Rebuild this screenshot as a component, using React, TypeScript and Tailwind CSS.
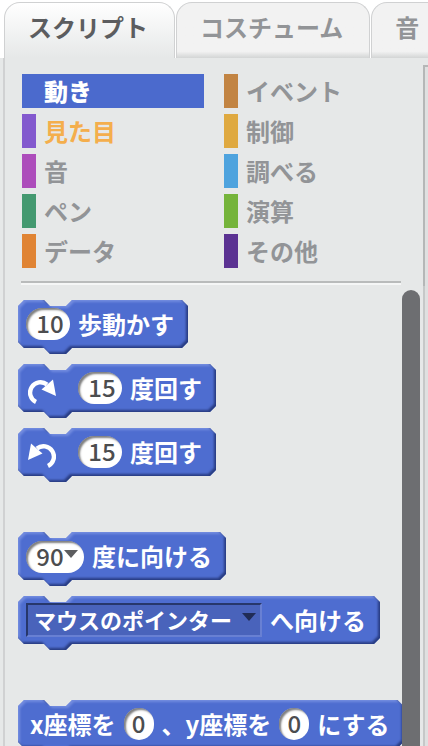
import type { ReactNode } from "react";

type Category = { name: string; color: string; tone: string };

const tabs = ["スクリプト", "コスチューム", "音"];

const categories: Category[] = [
  { name: "動き", color: "bg-[#4b6acd]", tone: "bg-[#4b6acd] font-black text-white" },
  { name: "見た目", color: "bg-[#8359ce]", tone: "text-[#f4ae4c]" },
  { name: "音", color: "bg-[#ad4dbb]", tone: "text-[#929497]" },
  { name: "ペン", color: "bg-[#449970]", tone: "text-[#929497]" },
  { name: "データ", color: "bg-[#e08434]", tone: "text-[#929497]" },
  { name: "イベント", color: "bg-[#c28443]", tone: "text-[#929497]" },
  { name: "制御", color: "bg-[#dfa940]", tone: "text-[#929497]" },
  { name: "調べる", color: "bg-[#4ea3de]", tone: "text-[#929497]" },
  { name: "演算", color: "bg-[#75b43b]", tone: "text-[#929497]" },
  { name: "その他", color: "bg-[#5b3292]", tone: "text-[#929497]" },
];

function BevelFilter() {
  return (
    <svg className="absolute size-0" aria-hidden="true">
      <filter id="bevel" x="-5%" y="-5%" width="110%" height="110%" colorInterpolationFilters="sRGB">
        <feOffset in="SourceAlpha" dx="2" dy="2" result="lightShift" />
        <feGaussianBlur in="lightShift" stdDeviation="1" result="lightBlur" />
        <feFlood floodColor="#8ba0ea" floodOpacity="0.6" />
        <feComposite operator="out" in2="lightBlur" result="lightEdge" />
        <feComposite in="lightEdge" in2="SourceAlpha" operator="in" result="light" />
        <feOffset in="SourceAlpha" dx="-2" dy="-2" result="darkShift" />
        <feGaussianBlur in="darkShift" stdDeviation="1" result="darkBlur" />
        <feFlood floodColor="#1c2c68" floodOpacity="0.75" />
        <feComposite operator="out" in2="darkBlur" result="darkEdge" />
        <feComposite in="darkEdge" in2="SourceAlpha" operator="in" result="dark" />
        <feMerge>
          <feMergeNode in="SourceGraphic" />
          <feMergeNode in="light" />
          <feMergeNode in="dark" />
        </feMerge>
      </filter>
    </svg>
  );
}

function Block({ children, className = "pl-2" }: { children: ReactNode; className?: string }) {
  return (
    <div className={`relative flex h-12 shrink-0 items-center gap-2 pr-3.5 whitespace-nowrap ${className}`}>
      <div className="absolute inset-x-0 top-0 -bottom-1.5 [filter:url(#bevel)]">
        <div className="h-full bg-[#4e6dd0] [clip-path:polygon(6px_0,26px_0,32px_6px,48px_6px,54px_0,calc(100%_-_6px)_0,100%_6px,100%_calc(100%_-_12px),calc(100%_-_6px)_calc(100%_-_6px),54px_calc(100%_-_6px),48px_100%,32px_100%,26px_calc(100%_-_6px),6px_calc(100%_-_6px),0_calc(100%_-_12px),0_6px)]" />
      </div>
      {children}
    </div>
  );
}

function Text({ children }: { children: string }) {
  return <span className="relative">{children}</span>;
}

function NumberField({ value, label, className = "w-11 pl-1" }: { value: string; label: string; className?: string }) {
  return (
    <input
      type="text"
      aria-label={label}
      defaultValue={value}
      className={`relative h-8 rounded-full bg-white pb-0.5 text-center font-medium text-[#4c4d4f] shadow-[inset_2px_2px_2px_#00000080] outline-none ${className}`}
    />
  );
}

function TurnIcon({ className = "" }: { className?: string }) {
  return (
    <svg viewBox="0 0 28 25" className={`relative mt-1.5 mr-3.5 ml-0.5 h-[25px] w-7 ${className}`} aria-hidden="true">
      <path d="M9 5.5A10.4 10.4 0 1 1 20 23" fill="none" stroke="white" strokeWidth="4.4" />
      <path d="M3 0.5L0 17L14.5 10.5Z" fill="white" />
    </svg>
  );
}

export default function App() {
  return (
    <div className="flex h-screen flex-col overflow-hidden bg-white font-['Noto_Sans_CJK_JP','Noto_Sans',sans-serif] text-2xl leading-8 font-bold">
      <BevelFilter />
      <div className="flex shrink-0 gap-px overflow-hidden pt-0.5 pl-1" role="tablist">
        {tabs.map((tab, i) => (
          <button
            key={tab}
            role="tab"
            aria-selected={i === 0}
            className={`h-14 shrink-0 rounded-t-2xl border border-b-0 border-[#d0d1d2] pr-[26px] pb-2 pl-[23px] whitespace-nowrap ${
              i === 0
                ? "bg-linear-to-b from-white to-[#e6e8e8] text-[#5c5d5f]"
                : "bg-[#f2f2f2] bg-linear-to-b from-[#f2f2f2] from-88% to-[#d3d5d5] text-[#929497]"
            }`}
          >
            {tab}
          </button>
        ))}
      </div>
      <div className="flex min-h-0 flex-1 bg-[#e6e8e8]">
        <main className="flex min-w-0 flex-1 flex-col border-l-2 border-[#d0d1d2] ml-[3px]">
          <div className="grid shrink-0 grid-flow-col grid-cols-2 grid-rows-5 gap-x-5 gap-y-1.5 px-[17px] pt-4">
            {categories.map((c) => (
              <button key={c.name} className={`flex h-[34px] items-center gap-2 whitespace-nowrap ${c.tone}`}>
                <span className={`h-full w-3.5 ${c.color}`} />
                {c.name}
              </button>
            ))}
          </div>
          <hr className="mt-[13px] mr-[22px] ml-4 h-1 shrink-0 border-t-2 border-[#b9bbbb] bg-[#f5f6f6]" />
          <div className="flex min-h-0 flex-1 pt-[5px] pr-[3px] pl-[13px]">
            <div className="flex min-w-0 flex-1 flex-col items-start gap-4 pt-2.5 text-white">
              <Block>
                <NumberField value="10" label="歩数" />
                <Text>歩動かす</Text>
              </Block>
              <Block>
                <TurnIcon className="-scale-x-100" />
                <NumberField value="15" label="右回りの角度" />
                <Text>度回す</Text>
              </Block>
              <Block>
                <TurnIcon />
                <NumberField value="15" label="左回りの角度" />
                <Text>度回す</Text>
              </Block>
              <Block className="mt-10 pl-2">
                <div className="relative">
                  <NumberField value="90" label="向き" className="w-[58px] pr-2.5" />
                  <button aria-label="向きを選ぶ" className="absolute top-2.5 right-1.5">
                    <svg viewBox="0 0 14 8" className="h-2 w-3.5" aria-hidden="true">
                      <path d="M0 0H14L7 8Z" fill="#5c5d5f" />
                    </svg>
                  </button>
                </div>
                <Text>度に向ける</Text>
              </Block>
              <Block>
                <div className="relative">
                  <select
                    aria-label="向ける対象"
                    className="block h-[34px] w-[236px] appearance-none border-2 border-t-[#27376b] border-r-[#6880d3] border-b-[#6880d3] border-l-[#27376b] bg-[#4963bb] pb-1 pl-1.5 text-[22px] leading-7 outline-none"
                  >
                    <option>マウスのポインター</option>
                  </select>
                  <svg viewBox="0 0 14 8" className="pointer-events-none absolute top-2.5 right-1.5 h-2 w-3.5" aria-hidden="true">
                    <path d="M0 0H14L7 8Z" fill="#202c56" />
                  </svg>
                </div>
                <Text>へ向ける</Text>
              </Block>
              <Block className="mt-10 pl-3">
                <Text>x座標を</Text>
                <NumberField value="0" label="x座標" className="w-[30px]" />
                <Text>、y座標を</Text>
                <NumberField value="0" label="y座標" className="w-[30px]" />
                <Text>にする</Text>
              </Block>
            </div>
            <div className="relative w-[18px] shrink-0 rounded-t-full bg-[#6d6e71]" />
          </div>
        </main>
        <aside className="flex w-[5px] shrink-0 flex-col pt-[7px]">
          <div className="h-[221px] border-t-2 border-l-2 border-[#b5b7b7] bg-[#dfe0e0]" />
          <div className="flex-1 border-l-2 border-[#c6c8c8] bg-[#dfe0e0]" />
        </aside>
      </div>
    </div>
  );
}
